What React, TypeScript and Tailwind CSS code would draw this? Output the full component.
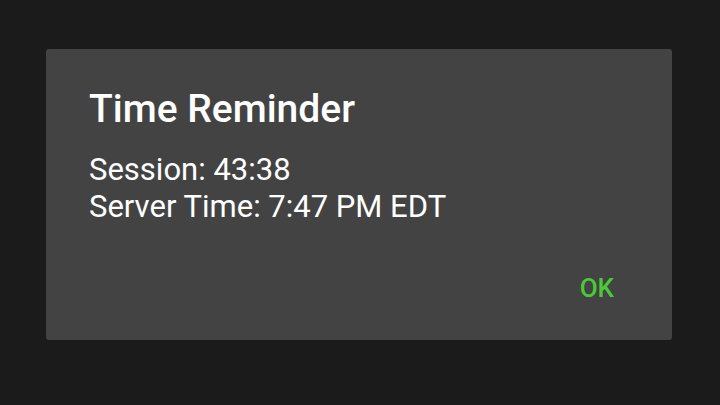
export default function App() {
  return (
    <main className="w-[720px] h-[405px] bg-[#1b1b1b] pt-[49px] pl-[46px] font-['Roboto',sans-serif]">
      <div className="w-[626px] h-[291px] bg-[#434343] rounded-[3px] flex flex-col pl-[43px] pr-[58px]">
        <h1 className="mt-[38px] text-[39px] leading-[45px] font-medium text-white">Time Reminder</h1>
        <div className="mt-[19px] text-[31px] leading-[37px] text-white">
          <p>Session: 43:38</p>
          <p>Server Time: 7:47 PM EDT</p>
        </div>
        <div className="mt-auto mb-[37px] flex justify-end">
          <button className="text-[26px] leading-[30px] font-medium text-[#4cc83a]">OK</button>
        </div>
      </div>
    </main>
  );
}
